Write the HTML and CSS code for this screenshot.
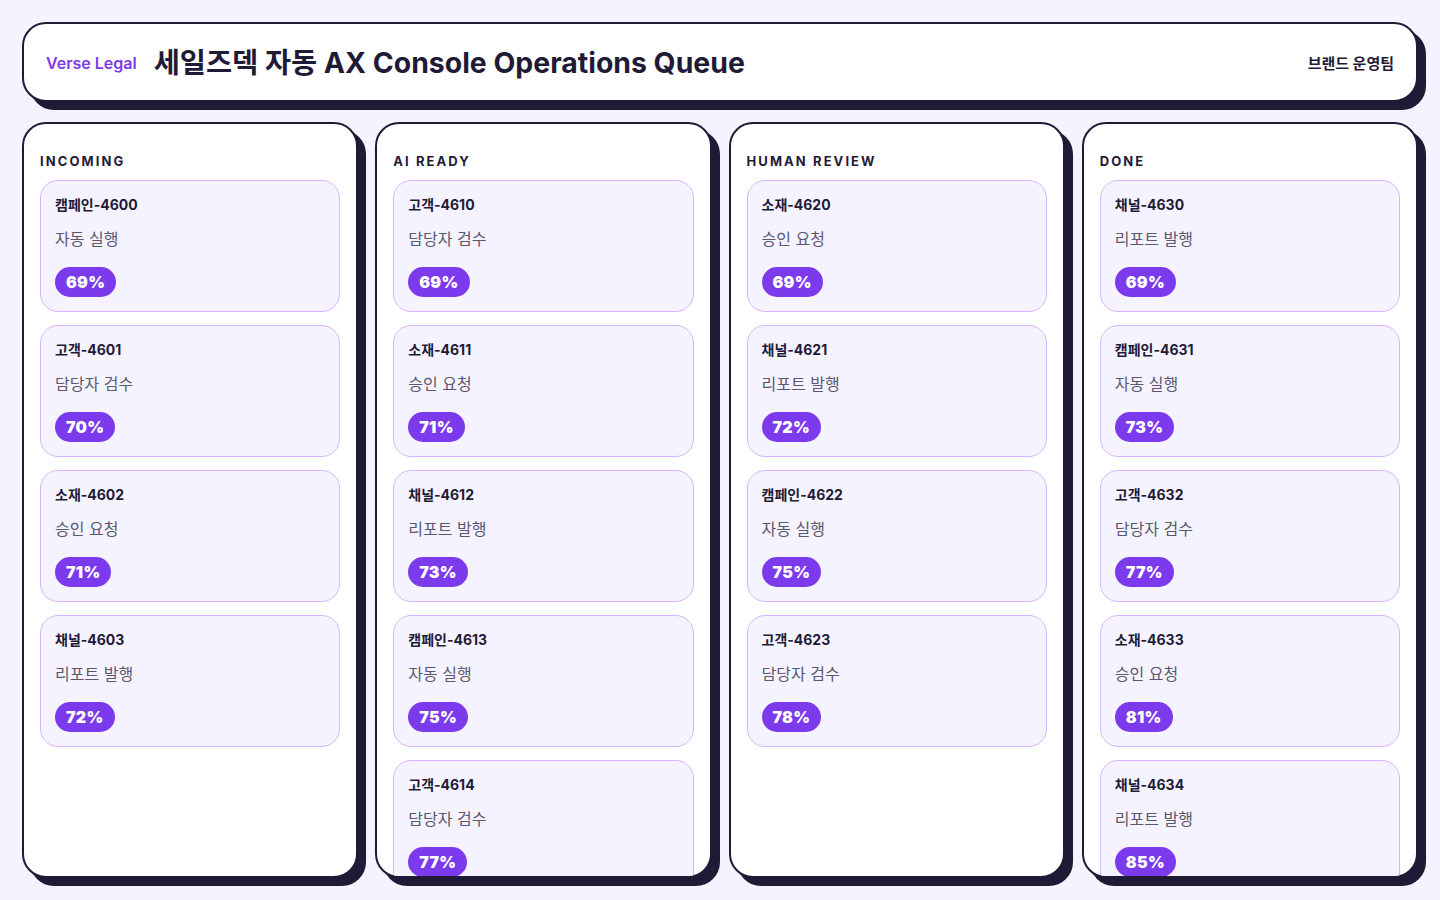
FILE: index.html
```html
<!DOCTYPE html>
<html lang="ko">
<head>
<meta charset="utf-8">
<title>세일즈덱 자동 AX Console Operations Queue</title>
<link rel="stylesheet" href="styles.css">
</head>
<body>
<div class="page">
  <header class="topbar">
    <span class="brand">Verse Legal</span>
    <h1 class="title">세일즈덱 자동 AX Console Operations Queue</h1>
    <span class="team">브랜드 운영팀</span>
  </header>
  <main class="board">
    <section class="column">
      <h2 class="col-title">INCOMING</h2>
      <div class="cards">
        <article class="card"><div class="card-id">캠페인-4600</div><div class="card-task">자동 실행</div><span class="badge">69%</span></article>
        <article class="card"><div class="card-id">고객-4601</div><div class="card-task">담당자 검수</div><span class="badge">70%</span></article>
        <article class="card"><div class="card-id">소재-4602</div><div class="card-task">승인 요청</div><span class="badge">71%</span></article>
        <article class="card"><div class="card-id">채널-4603</div><div class="card-task">리포트 발행</div><span class="badge">72%</span></article>
      </div>
    </section>
    <section class="column">
      <h2 class="col-title">AI READY</h2>
      <div class="cards">
        <article class="card"><div class="card-id">고객-4610</div><div class="card-task">담당자 검수</div><span class="badge">69%</span></article>
        <article class="card"><div class="card-id">소재-4611</div><div class="card-task">승인 요청</div><span class="badge">71%</span></article>
        <article class="card"><div class="card-id">채널-4612</div><div class="card-task">리포트 발행</div><span class="badge">73%</span></article>
        <article class="card"><div class="card-id">캠페인-4613</div><div class="card-task">자동 실행</div><span class="badge">75%</span></article>
        <article class="card"><div class="card-id">고객-4614</div><div class="card-task">담당자 검수</div><span class="badge">77%</span></article>
      </div>
    </section>
    <section class="column">
      <h2 class="col-title">HUMAN REVIEW</h2>
      <div class="cards">
        <article class="card"><div class="card-id">소재-4620</div><div class="card-task">승인 요청</div><span class="badge">69%</span></article>
        <article class="card"><div class="card-id">채널-4621</div><div class="card-task">리포트 발행</div><span class="badge">72%</span></article>
        <article class="card"><div class="card-id">캠페인-4622</div><div class="card-task">자동 실행</div><span class="badge">75%</span></article>
        <article class="card"><div class="card-id">고객-4623</div><div class="card-task">담당자 검수</div><span class="badge">78%</span></article>
      </div>
    </section>
    <section class="column">
      <h2 class="col-title">DONE</h2>
      <div class="cards">
        <article class="card"><div class="card-id">채널-4630</div><div class="card-task">리포트 발행</div><span class="badge">69%</span></article>
        <article class="card"><div class="card-id">캠페인-4631</div><div class="card-task">자동 실행</div><span class="badge">73%</span></article>
        <article class="card"><div class="card-id">고객-4632</div><div class="card-task">담당자 검수</div><span class="badge">77%</span></article>
        <article class="card"><div class="card-id">소재-4633</div><div class="card-task">승인 요청</div><span class="badge">81%</span></article>
        <article class="card"><div class="card-id">채널-4634</div><div class="card-task">리포트 발행</div><span class="badge">85%</span></article>
      </div>
    </section>
  </main>
</div>
</body>
</html>
```

FILE: styles.css
```css
* {
  box-sizing: border-box;
}

html, body {
  margin: 0;
  padding: 0;
}

body {
  background: #f5f3ff;
  font-family: Inter, "Noto Sans CJK KR", "Noto Sans", sans-serif;
  color: #1f1b37;
}

.page {
  width: 1440px;
  height: 900px;
  padding: 22px;
  display: grid;
  grid-template-rows: 80px 1fr;
  gap: 20px;
}

.topbar {
  display: flex;
  align-items: center;
  padding: 2px 22px 0;
  background: #ffffff;
  border: 2px solid #1f1b37;
  border-radius: 24px;
  box-shadow: 8px 8px 0 #1f1b37;
}

.brand {
  font-size: 16px;
  font-weight: 600;
  color: #7c3aed;
  margin-right: 17px;
}

.title {
  margin: 0;
  font-size: 28.4px;
  font-weight: 700;
  line-height: 36px;
  color: #1f1b37;
  flex: 1;
}

.team {
  font-size: 15px;
  font-weight: 700;
  color: #1f1b37;
  margin-top: -2px;
}

.board {
  display: grid;
  grid-template-columns: repeat(4, minmax(0, 1fr));
  gap: 17px;
  min-height: 0;
}

.column {
  background: #ffffff;
  border: 2px solid #1f1b37;
  border-radius: 24px;
  box-shadow: 8px 8px 0 #1f1b37;
  padding: 29px 16px 16px;
  overflow: hidden;
  min-height: 0;
}

.col-title {
  margin: 0 0 11px;
  font-size: 13px;
  line-height: 16px;
  font-weight: 700;
  letter-spacing: 0.16em;
  color: #1f1b37;
}

.cards {
  display: flex;
  flex-direction: column;
  gap: 13px;
}

.card {
  flex-shrink: 0;
  background: #f5f3ff;
  border: 1px solid #d8b4fe;
  border-radius: 18px;
  padding: 15px 14px 14px;
  display: flex;
  flex-direction: column;
  align-items: flex-start;
}

.card-id {
  font-size: 14px;
  line-height: 18px;
  font-weight: 700;
  color: #1f1b37;
}

.card-task {
  margin-top: 13px;
  font-size: 16px;
  line-height: 24px;
  color: #5b5770;
}

.badge {
  margin-top: 16px;
  height: 30px;
  line-height: 30px;
  padding: 0 11px;
  border-radius: 999px;
  background: #7c3aed;
  color: #ffffff;
  font-size: 16px;
  font-weight: 900;
  letter-spacing: 0.02em;
}
```
